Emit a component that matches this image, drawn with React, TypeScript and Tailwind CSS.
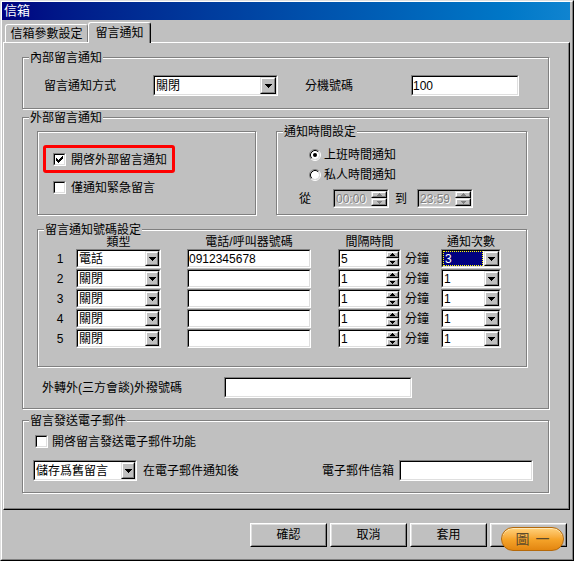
import React from "react";

function DownArrow({ color = "#000" }: { color?: string }) {
  return (
    <svg width="7" height="4" viewBox="0 0 7 4" shapeRendering="crispEdges">
      <path d="M0 0H7V1H6V2H5V3H4V4H3V3H2V2H1V1H0Z" fill={color} />
    </svg>
  );
}

function SmallUp({ color = "#000" }: { color?: string }) {
  return (
    <svg width="5" height="3" viewBox="0 0 5 3" shapeRendering="crispEdges">
      <path d="M2 0H3V1H4V2H5V3H0V2H1V1H2Z" fill={color} />
    </svg>
  );
}

function SmallDown({ color = "#000" }: { color?: string }) {
  return (
    <svg width="5" height="3" viewBox="0 0 5 3" shapeRendering="crispEdges">
      <path d="M0 0H5V1H4V2H3V3H2V2H1V1H0Z" fill={color} />
    </svg>
  );
}

function Raised({ className = "", children }: { className?: string; children?: React.ReactNode }) {
  return (
    <div className={`flex shrink-0 border border-t-[#dfdfdf] border-l-[#dfdfdf] border-r-black border-b-black bg-[#c0c0c0] ${className}`}>
      <div className="flex h-full w-full items-center justify-center border border-t-white border-l-white border-r-[#808080] border-b-[#808080]">
        {children}
      </div>
    </div>
  );
}

function Field({ className = "", children }: { className?: string; children?: React.ReactNode }) {
  return (
    <div className={`flex shrink-0 border border-t-[#808080] border-l-[#808080] border-r-white border-b-white ${className}`}>
      <div className="flex h-full w-full items-center border border-t-black border-l-black border-r-[#dfdfdf] border-b-[#dfdfdf] bg-white">
        {children}
      </div>
    </div>
  );
}

function Combo({
  className = "",
  btn = "w-[14px]",
  text,
  selected = false,
}: {
  className?: string;
  btn?: string;
  text: string;
  selected?: boolean;
}) {
  return (
    <div className={`flex shrink-0 border border-t-[#808080] border-l-[#808080] border-r-white border-b-white ${className}`}>
      <div className="flex h-full min-w-0 flex-1 border border-t-black border-l-black border-r-[#dfdfdf] border-b-[#dfdfdf] bg-white">
        {selected ? (
          <div className="mr-[1px] flex flex-1 items-center border border-dotted border-[#ffff00] bg-[#000080] pl-[1px] text-white">
            {text}
          </div>
        ) : (
          <div className="flex flex-1 items-center overflow-hidden whitespace-nowrap pl-[1px]">{text}</div>
        )}
        <Raised className={`h-full ${btn}`}>
          <DownArrow />
        </Raised>
      </div>
    </div>
  );
}

function SpinBtns({ disabled = false, w = "w-[13px]" }: { disabled?: boolean; w?: string }) {
  const c = disabled ? "#808080" : "#000";
  return (
    <div className={`flex shrink-0 flex-col ${w}`}>
      <Raised className="h-[7px] w-full">
        <SmallUp color={c} />
      </Raised>
      <Raised className="h-[8px] w-full">
        <SmallDown color={c} />
      </Raised>
    </div>
  );
}

function Spin({ className = "", value }: { className?: string; value: string }) {
  return (
    <div className={`flex h-[19px] w-[63px] shrink-0 border border-t-[#808080] border-l-[#808080] border-r-white border-b-white ${className}`}>
      <div className="flex h-full flex-1 border border-t-black border-l-black border-r-[#dfdfdf] border-b-[#dfdfdf] bg-white">
        <span className="flex flex-1 items-center pl-[1px]">{value}</span>
        <SpinBtns w="w-[13px]" />
      </div>
    </div>
  );
}

function TimeBox({ className = "", value }: { className?: string; value: string }) {
  return (
    <div className={`flex h-[19px] w-[56px] shrink-0 border border-t-[#808080] border-l-[#808080] border-r-white border-b-white ${className}`}>
      <div className="flex h-full flex-1 border border-t-black border-l-black border-r-[#dfdfdf] border-b-[#dfdfdf] bg-[#c0c0c0]">
        <span className="flex flex-1 items-center pl-[1px] text-[#808080] [text-shadow:1px_1px_0_#fff]">{value}</span>
        <SpinBtns disabled w="w-[16px]" />
      </div>
    </div>
  );
}

function Check({ checked = false }: { checked?: boolean }) {
  return (
    <div className="h-[13px] w-[13px] shrink-0 border border-t-[#808080] border-l-[#808080] border-r-white border-b-white">
      <div className="flex h-full w-full items-center justify-center border border-t-black border-l-black border-r-[#dfdfdf] border-b-[#dfdfdf] bg-white">
        {checked && (
          <svg width="7" height="7" viewBox="0 0 7 7" shapeRendering="crispEdges">
            <rect x="6" y="0" width="1" height="1" fill="#000" />
            <rect x="5" y="1" width="2" height="1" fill="#000" />
            <rect x="0" y="2" width="1" height="1" fill="#000" />
            <rect x="4" y="2" width="3" height="1" fill="#000" />
            <rect x="0" y="3" width="2" height="1" fill="#000" />
            <rect x="3" y="3" width="3" height="1" fill="#000" />
            <rect x="0" y="4" width="5" height="1" fill="#000" />
            <rect x="1" y="5" width="3" height="1" fill="#000" />
            <rect x="2" y="6" width="1" height="1" fill="#000" />
          </svg>
        )}
      </div>
    </div>
  );
}

function Radio({ checked = false }: { checked?: boolean }) {
  return (
    <svg width="12" height="12" viewBox="0 0 12 12" className="shrink-0">
      <path d="M2.11 9.89 A5.5 5.5 0 0 1 9.89 2.11" stroke="#808080" fill="none" />
      <path d="M9.89 2.11 A5.5 5.5 0 0 1 2.11 9.89" stroke="#ffffff" fill="none" />
      <circle cx="6" cy="6" r="4" fill="#ffffff" />
      <path d="M2.82 9.18 A4.5 4.5 0 0 1 9.18 2.82" stroke="#000000" fill="none" />
      <path d="M9.18 2.82 A4.5 4.5 0 0 1 2.82 9.18" stroke="#dfdfdf" fill="none" />
      {checked && <circle cx="6" cy="6" r="2" fill="#000000" />}
    </svg>
  );
}

function Group({
  title,
  className = "",
  children,
}: {
  title?: string;
  className?: string;
  children?: React.ReactNode;
}) {
  return (
    <div className={`relative shrink-0 border border-[#808080] shadow-[1px_1px_0_#ffffff,inset_1px_1px_0_#ffffff] ${className}`}>
      {title && (
        <span className="absolute -top-[6px] left-[6px] whitespace-nowrap bg-[#c0c0c0] px-[1px] leading-[12px]">
          {title}
        </span>
      )}
      {children}
    </div>
  );
}

function PushBtn({ children }: { children?: React.ReactNode }) {
  return (
    <div className="h-[24px] w-[77px] border border-t-white border-l-white border-r-black border-b-black">
      <div className="flex h-full w-full items-center justify-center border border-t-[#dfdfdf] border-l-[#dfdfdf] border-r-[#808080] border-b-[#808080]">
        {children}
      </div>
    </div>
  );
}

const rows = [
  { n: "1", type: "電話", phone: "0912345678", interval: "5", count: "3", sel: true },
  { n: "2", type: "關閉", phone: "", interval: "1", count: "1", sel: false },
  { n: "3", type: "關閉", phone: "", interval: "1", count: "1", sel: false },
  { n: "4", type: "關閉", phone: "", interval: "1", count: "1", sel: false },
  { n: "5", type: "關閉", phone: "", interval: "1", count: "1", sel: false },
];

export default function App() {
  return (
    <div className="relative h-[561px] w-[574px] overflow-hidden border border-t-[#dfdfdf] border-l-[#dfdfdf] border-r-black border-b-black bg-[#c0c0c0] font-['Liberation_Sans','Noto_Sans_CJK_TC',sans-serif] text-[12px] leading-[14px] text-black">
      <div className="flex h-full flex-col border border-t-white border-l-white border-r-[#808080] border-b-[#808080] pr-[2px]">
        {/* Title bar */}
        <div className="flex h-[18px] shrink-0 items-center bg-linear-to-r from-[#000080] to-[#1084d0] pl-[2px] text-[13px] text-white">
          信箱
        </div>

        {/* Tabs */}
        <div className="flex h-[22px] shrink-0 items-end pl-[3px]">
          <div className="flex h-[18px] w-[83px] items-center justify-center rounded-t-[3px] border-t border-l border-r border-t-white border-l-white border-r-[#808080]">
            信箱參數設定
          </div>
          <div className="relative z-10 -mb-px flex h-[21px] w-[63px] items-start justify-center rounded-t-[3px] border-t border-l border-r border-t-white border-l-white border-r-black bg-[#c0c0c0] pt-[3px] shadow-[inset_-1px_0_0_#808080]">
            留言通知
          </div>
        </div>

        {/* Panel */}
        <div className="ml-[1px] flex h-[468px] shrink-0 flex-col border border-t-white border-l-white border-r-black border-b-black shadow-[inset_-1px_-1px_0_#808080]">
          <div className="ml-[18px] mt-[14px] flex w-[527px] flex-col">
            {/* Group 1 */}
            <Group title="內部留言通知" className="h-[52px] pl-[21px] pt-[17px]">
              <div className="flex h-[21px] items-center">
                <span className="w-[109px] shrink-0">留言通知方式</span>
                <Combo className="h-[21px] w-[125px]" btn="w-[16px]" text="關閉" />
                <span className="ml-[27px] w-[106px] shrink-0">分機號碼</span>
                <Field className="h-[21px] w-[108px]">100</Field>
              </div>
            </Group>

            {/* Group 2 */}
            <Group title="外部留言通知" className="mt-[8px] h-[292px] pl-[14px] pt-[13px]">
              <div className="flex gap-[20px]">
                <Group className="h-[84px] w-[219px] pl-[15px] pt-[21px]">
                  <div className="absolute left-[5px] top-[13px] h-[28px] w-[132px] rounded-[3px] border-[3px] border-[#ff0000]" />
                  <div className="flex h-[13px] items-center gap-[5px]">
                    <Check checked />
                    <span className="whitespace-nowrap">開啓外部留言通知</span>
                  </div>
                  <div className="mt-[15px] flex h-[13px] items-center gap-[5px]">
                    <Check />
                    <span className="whitespace-nowrap">僅通知緊急留言</span>
                  </div>
                </Group>
                <Group title="通知時間設定" className="h-[84px] w-[251px] pt-[17px]">
                  <div className="flex h-[12px] items-center gap-[3px] pl-[32px]">
                    <Radio checked />
                    <span className="whitespace-nowrap">上班時間通知</span>
                  </div>
                  <div className="mt-[8px] flex h-[12px] items-center gap-[3px] pl-[32px]">
                    <Radio />
                    <span className="whitespace-nowrap">私人時間通知</span>
                  </div>
                  <div className="mt-[8px] flex h-[19px] items-center pl-[22px]">
                    <span className="w-[34px] shrink-0">從</span>
                    <TimeBox value="00:00" />
                    <span className="ml-[6px] w-[12px] shrink-0">到</span>
                    <TimeBox className="ml-[10px]" value="23:59" />
                  </div>
                </Group>
              </div>

              <Group title="留言通知號碼設定" className="mt-[14px] h-[138px] w-[490px] pt-[6px]">
                <div className="flex h-[13px] whitespace-nowrap leading-[12px]">
                  <div className="w-[38px] shrink-0" />
                  <div className="w-[85px] shrink-0 text-center">類型</div>
                  <div className="ml-[26px] w-[124px] shrink-0 text-center">電話/呼叫器號碼</div>
                  <div className="ml-[27px] w-[63px] shrink-0 text-center">間隔時間</div>
                  <div className="ml-[40px] w-[60px] shrink-0 text-center">通知次數</div>
                </div>
                <div className="flex flex-col gap-[1px]">
                  {rows.map((r) => (
                    <div key={r.n} className="flex h-[19px] items-center">
                      <div className="w-[38px] shrink-0 pl-[10px] pr-[4px] text-center">{r.n}</div>
                      <Combo className="h-[19px] w-[85px]" btn="w-[14px]" text={r.type} />
                      <Field className="ml-[26px] h-[19px] w-[124px]">{r.phone}</Field>
                      <Spin className="ml-[27px]" value={r.interval} />
                      <span className="ml-[4px] w-[24px] shrink-0 whitespace-nowrap">分鐘</span>
                      <Combo className="ml-[12px] h-[19px] w-[60px]" btn="w-[15px]" text={r.count} selected={r.sel} />
                    </div>
                  ))}
                </div>
              </Group>

              <div className="mt-[10px] flex h-[21px] items-center pl-[5px]">
                <span className="w-[182px] shrink-0 whitespace-nowrap">外轉外(三方會談)外撥號碼</span>
                <Field className="h-[21px] w-[188px]" />
              </div>
            </Group>

            {/* Group 3 */}
            <Group title="留言發送電子郵件" className="mt-[11px] h-[73px] pl-[10px] pr-[15px] pt-[14px]">
              <div className="flex h-[13px] items-center gap-[4px] pl-[2px]">
                <Check />
                <span className="whitespace-nowrap">開啓留言發送電子郵件功能</span>
              </div>
              <div className="mt-[12px] flex h-[21px] items-center">
                <Combo className="h-[21px] w-[104px]" btn="w-[14px]" text="儲存爲舊留言" />
                <span className="ml-[6px] whitespace-nowrap">在電子郵件通知後</span>
                <span className="ml-auto whitespace-nowrap">電子郵件信箱</span>
                <Field className="ml-[5px] h-[21px] w-[134px]" />
              </div>
            </Group>
          </div>
        </div>

        {/* Buttons */}
        <div className="mt-[13px] flex shrink-0 justify-end gap-[3px] pr-[3px]">
          <PushBtn>確認</PushBtn>
          <PushBtn>取消</PushBtn>
          <PushBtn>套用</PushBtn>
          <PushBtn />
        </div>
      </div>

      {/* Annotation pill */}
      <div className="absolute left-[500px] top-[526px] flex h-[24px] w-[63px] items-center justify-center rounded-full border border-[#b5690a] bg-linear-to-b from-[#ffd27a] via-[#f6a52a] to-[#e3860f] text-[14px] leading-[16px] text-[#5b4a2c] shadow-[inset_0_1px_0_#ffe9b8]">
        <span className="pl-[6px] tracking-[6px]">圖一</span>
      </div>
    </div>
  );
}
